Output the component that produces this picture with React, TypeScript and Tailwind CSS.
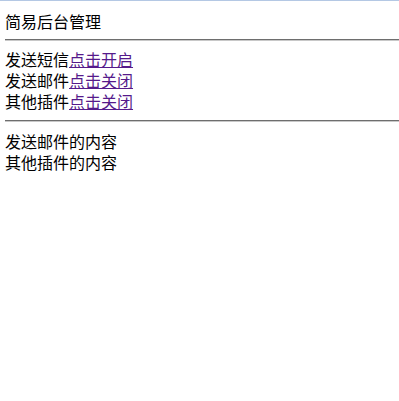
export default function App() {
    const toggles = [
        { name: "发送短信", action: "点击开启" },
        { name: "发送邮件", action: "点击关闭" },
        { name: "其他插件", action: "点击关闭" },
    ];
    const contents = ["发送邮件的内容", "其他插件的内容"];

    return (
        <div
            className="min-h-[401px] w-[399px] border-t border-[#b4c8e4] bg-white pl-[5px] pt-[10px] text-[16px] leading-[21px] text-black"
            style={{ fontFamily: '"Noto Sans CJK SC", sans-serif' }}
        >
            <div>简易后台管理</div>
            <hr className="my-[7px] border-t border-b border-t-[#6e6e6e] border-b-[#c8c8c8]" />
            <div className="pt-[1px]">
                {toggles.map((t) => (
                    <div key={t.name}>
                        {t.name}
                        <a href="#" className="text-[#551a8b] underline">
                            {t.action}
                        </a>
                    </div>
                ))}
            </div>
            <hr className="mt-[8px] mb-[8px] border-t border-b border-t-[#6e6e6e] border-b-[#c8c8c8]" />
            <div className="pt-[1px]">
                {contents.map((c) => (
                    <div key={c}>{c}</div>
                ))}
            </div>
        </div>
    );
}
